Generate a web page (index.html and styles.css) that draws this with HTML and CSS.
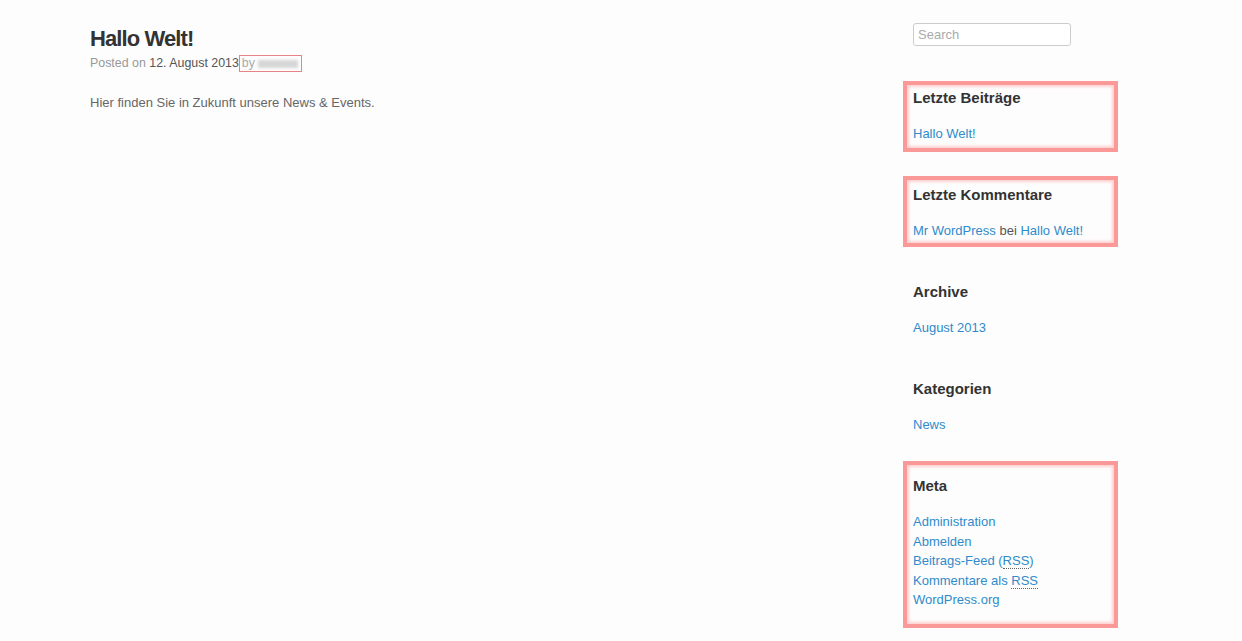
FILE: index.html
```html
<!DOCTYPE html>
<html lang="de">
<head>
    <meta charset="UTF-8">
    <meta name="viewport" content="width=device-width, initial-scale=1.0">
    <title>Hallo Welt!</title>
    <link rel="stylesheet" href="styles.css">
</head>
<body>
    <div class="page">
        <main class="content">
            <article class="post">
                <h1 class="entry-title">Hallo Welt!</h1>
                <div class="entry-meta">
                    <span class="meta-prep">Posted on</span>
                    <a class="entry-date" href="#">12. August 2013</a><span class="by-author">by <span class="author-hidden"></span></span>
                </div>
                <div class="entry-content">
                    <p>Hier finden Sie in Zukunft unsere News &amp; Events.</p>
                </div>
            </article>
        </main>

        <aside class="sidebar">
            <form class="search-form">
                <input class="search-field" type="text" placeholder="Search">
            </form>

            <section class="widget marked mark-recent">
                <h3 class="widget-title">Letzte Beiträge</h3>
                <ul>
                    <li><a href="#">Hallo Welt!</a></li>
                </ul>
            </section>

            <section class="widget marked mark-comments">
                <h3 class="widget-title">Letzte Kommentare</h3>
                <ul>
                    <li><a href="#">Mr WordPress</a> bei <a href="#">Hallo Welt!</a></li>
                </ul>
            </section>

            <section class="widget">
                <h3 class="widget-title">Archive</h3>
                <ul>
                    <li><a href="#">August 2013</a></li>
                </ul>
            </section>

            <section class="widget">
                <h3 class="widget-title">Kategorien</h3>
                <ul>
                    <li><a href="#">News</a></li>
                </ul>
            </section>

            <section class="widget marked mark-meta">
                <h3 class="widget-title">Meta</h3>
                <ul>
                    <li><a href="#">Administration</a></li>
                    <li><a href="#">Abmelden</a></li>
                    <li><a href="#">Beitrags-Feed (<abbr title="Really Simple Syndication">RSS</abbr>)</a></li>
                    <li><a href="#">Kommentare als <abbr title="Really Simple Syndication">RSS</abbr></a></li>
                    <li><a href="#">WordPress.org</a></li>
                </ul>
            </section>
        </aside>
    </div>
</body>
</html>
```

FILE: styles.css
```css
*, *::before, *::after{
    margin: 0;
    padding: 0;
    box-sizing: border-box;
}

body{
    background-color: #fdfdfd;
    color: #555;
    font-family: "Liberation Sans", Arial, sans-serif;
    font-size: 13px;
}

a{
    color: #2f8bcb;
    text-decoration: none;
}

ul{
    list-style: none;
}

.page{
    display: flex;
    padding: 24px 0 0 90px;
}

.content{
    flex: 1;
}

/* post */

.entry-title{
    margin-top: 2px;
    font-size: 22px;
    line-height: 26px;
    letter-spacing: -0.9px;
    font-weight: bold;
    color: #333;
}

.entry-meta{
    margin-top: 2px;
    font-size: 12.4px;
    line-height: 18px;
    color: #999;
}

.entry-date{
    color: #555;
}

.by-author{
    display: inline-block;
    height: 17px;
    padding: 0 3px 0 2px;
    border: 1px solid #e88484;
    color: #aaa;
    line-height: 15px;
}

.author-hidden{
    display: inline-block;
    width: 40px;
    height: 8px;
    vertical-align: middle;
    background-color: #d6d6d6;
    filter: blur(1.5px);
}

.entry-content{
    margin-top: 21px;
    line-height: 20px;
    color: #666;
}

/* sidebar */

.sidebar{
    width: 205px;
    margin-right: 124px;
}

.search-field{
    display: block;
    width: 158px;
    height: 23px;
    margin-top: -1px;
    padding: 0 4px;
    border: 1px solid #ccc;
    border-radius: 3px;
    background-color: #fff;
    font-family: inherit;
    font-size: 13px;
    color: #555;
}

.search-field::placeholder{
    color: #aaa;
}

.search-form{
    margin-bottom: 42px;
}

.widget{
    position: relative;
    margin-bottom: 41.5px;
}

.widget-title{
    margin-bottom: 16px;
    font-size: 15px;
    line-height: 20px;
    font-weight: bold;
    color: #333;
}

.widget li{
    line-height: 19.5px;
}

abbr{
    text-decoration: none;
    border-bottom: 1px dotted #666;
}

/* red frames drawn around some widgets */

.marked::after{
    content: "";
    position: absolute;
    left: -10px;
    width: 215px;
    border: 4px solid #fb9898;
    box-shadow: inset 0 0 3px 2px #fdd0d0;
    pointer-events: none;
}

.mark-recent::after{
    top: -7px;
    bottom: -8px;
}

.mark-comments::after{
    top: -9px;
    bottom: -6px;
}

.mark-meta::after{
    top: -15px;
    bottom: -18px;
}
```
